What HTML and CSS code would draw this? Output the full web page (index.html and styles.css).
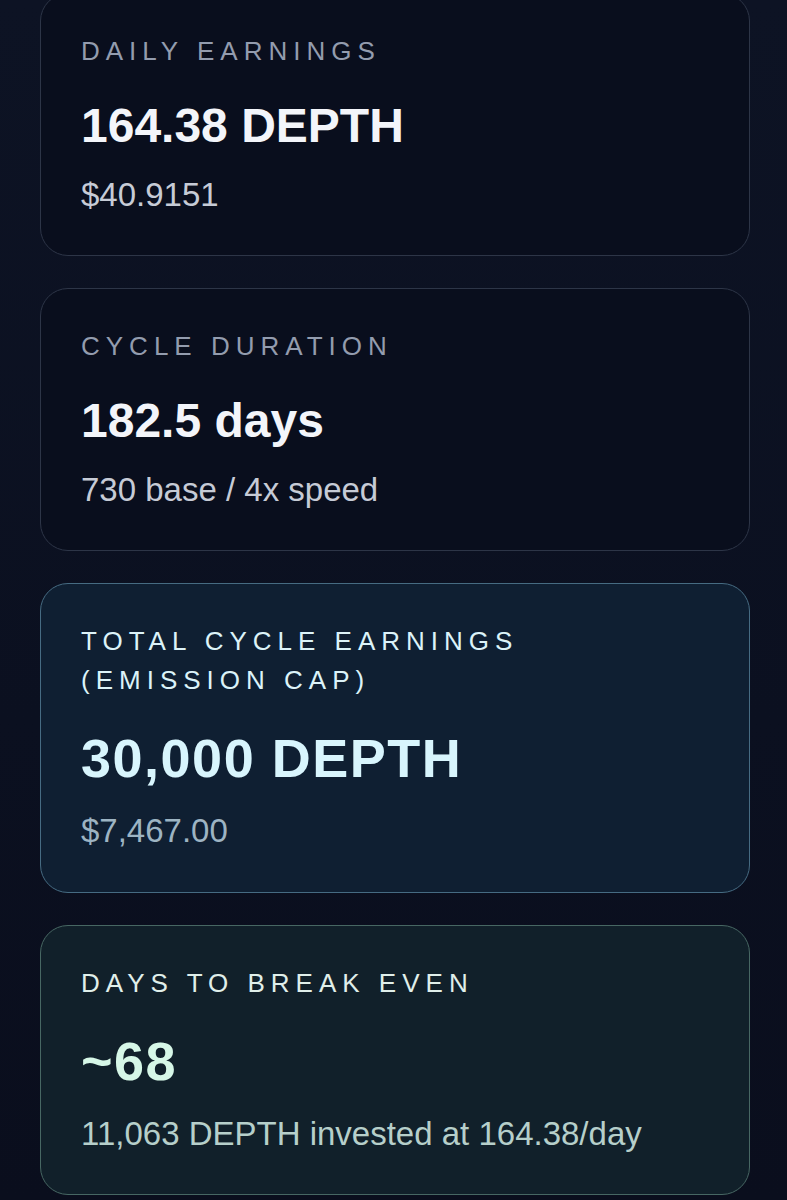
FILE: index.html
```html
<!DOCTYPE html>
<html lang="en">
<head>
  <meta charset="UTF-8">
  <title>Cycle Stats</title>
  <link rel="stylesheet" href="styles.css">
</head>
<body>

  <div class="stats">

    <!-- Daily -->
    <div class="stat-card">
      <p class="stat-label">Daily Earnings</p>
      <p class="stat-value">164.38 DEPTH</p>
      <p class="stat-sub">$40.9151</p>
    </div>

    <!-- Cycle -->
    <div class="stat-card">
      <p class="stat-label">Cycle Duration</p>
      <p class="stat-value">182.5 days</p>
      <p class="stat-sub">730 base / 4x speed</p>
    </div>

    <!-- Total -->
    <div class="stat-card highlight total">
      <p class="stat-label">Total Cycle Earnings<br>(Emission Cap)</p>
      <p class="stat-value">30,000 DEPTH</p>
      <p class="stat-sub">$7,467.00</p>
    </div>

    <!-- Break even -->
    <div class="stat-card highlight breakeven">
      <p class="stat-label">Days to Break Even</p>
      <p class="stat-value">~68</p>
      <p class="stat-sub">11,063 DEPTH invested at 164.38/day</p>
    </div>

  </div>

</body>
</html>
```

FILE: styles.css
```css
* {
  box-sizing: border-box;
}

body {
  margin: 0;
  padding: 0;
  height: 1200px;
  overflow: hidden;
  font-family: 'Liberation Sans', Arial, sans-serif;
  background: linear-gradient(180deg, #0d1324 0%, #0b1020 60%, #0a0e1d 100%);
}

.stats {
  display: flex;
  flex-direction: column;
  gap: 32px;
  width: 710px;
  margin: -7px 0 0 40px;
}

.stat-card {
  background: #090e1d;
  border: 1px solid #2d3547;
  border-radius: 28px;
  padding: 38px 40px 41px;
}

.stat-card p {
  margin: 0;
}

.stat-label {
  font-size: 26px;
  line-height: 39px;
  letter-spacing: 6px;
  text-transform: uppercase;
  color: #939cae;
}

.stat-value {
  margin-top: 26px !important;
  font-size: 48px;
  line-height: 1.2;
  font-weight: bold;
  color: #f3f5fa;
}

.stat-sub {
  margin-top: 20px !important;
  font-size: 33px;
  line-height: 1.2;
  color: #c6cbd6;
}

/* highlighted cards */
.highlight .stat-value {
  font-size: 54px;
  letter-spacing: 1.5px;
}

.total {
  background: #0f1f32;
  border-color: #466b82;
}

.total .stat-label {
  color: #dcf3f9;
}

.total .stat-value {
  color: #d8f5fd;
}

.total .stat-sub {
  color: #9db4c3;
}

.breakeven {
  background: #11202a;
  border-color: #476763;
}

.breakeven .stat-label {
  color: #e0efea;
}

.breakeven .stat-value {
  color: #d6f7e7;
}

.breakeven .stat-sub {
  color: #b6cfca;
}
```
